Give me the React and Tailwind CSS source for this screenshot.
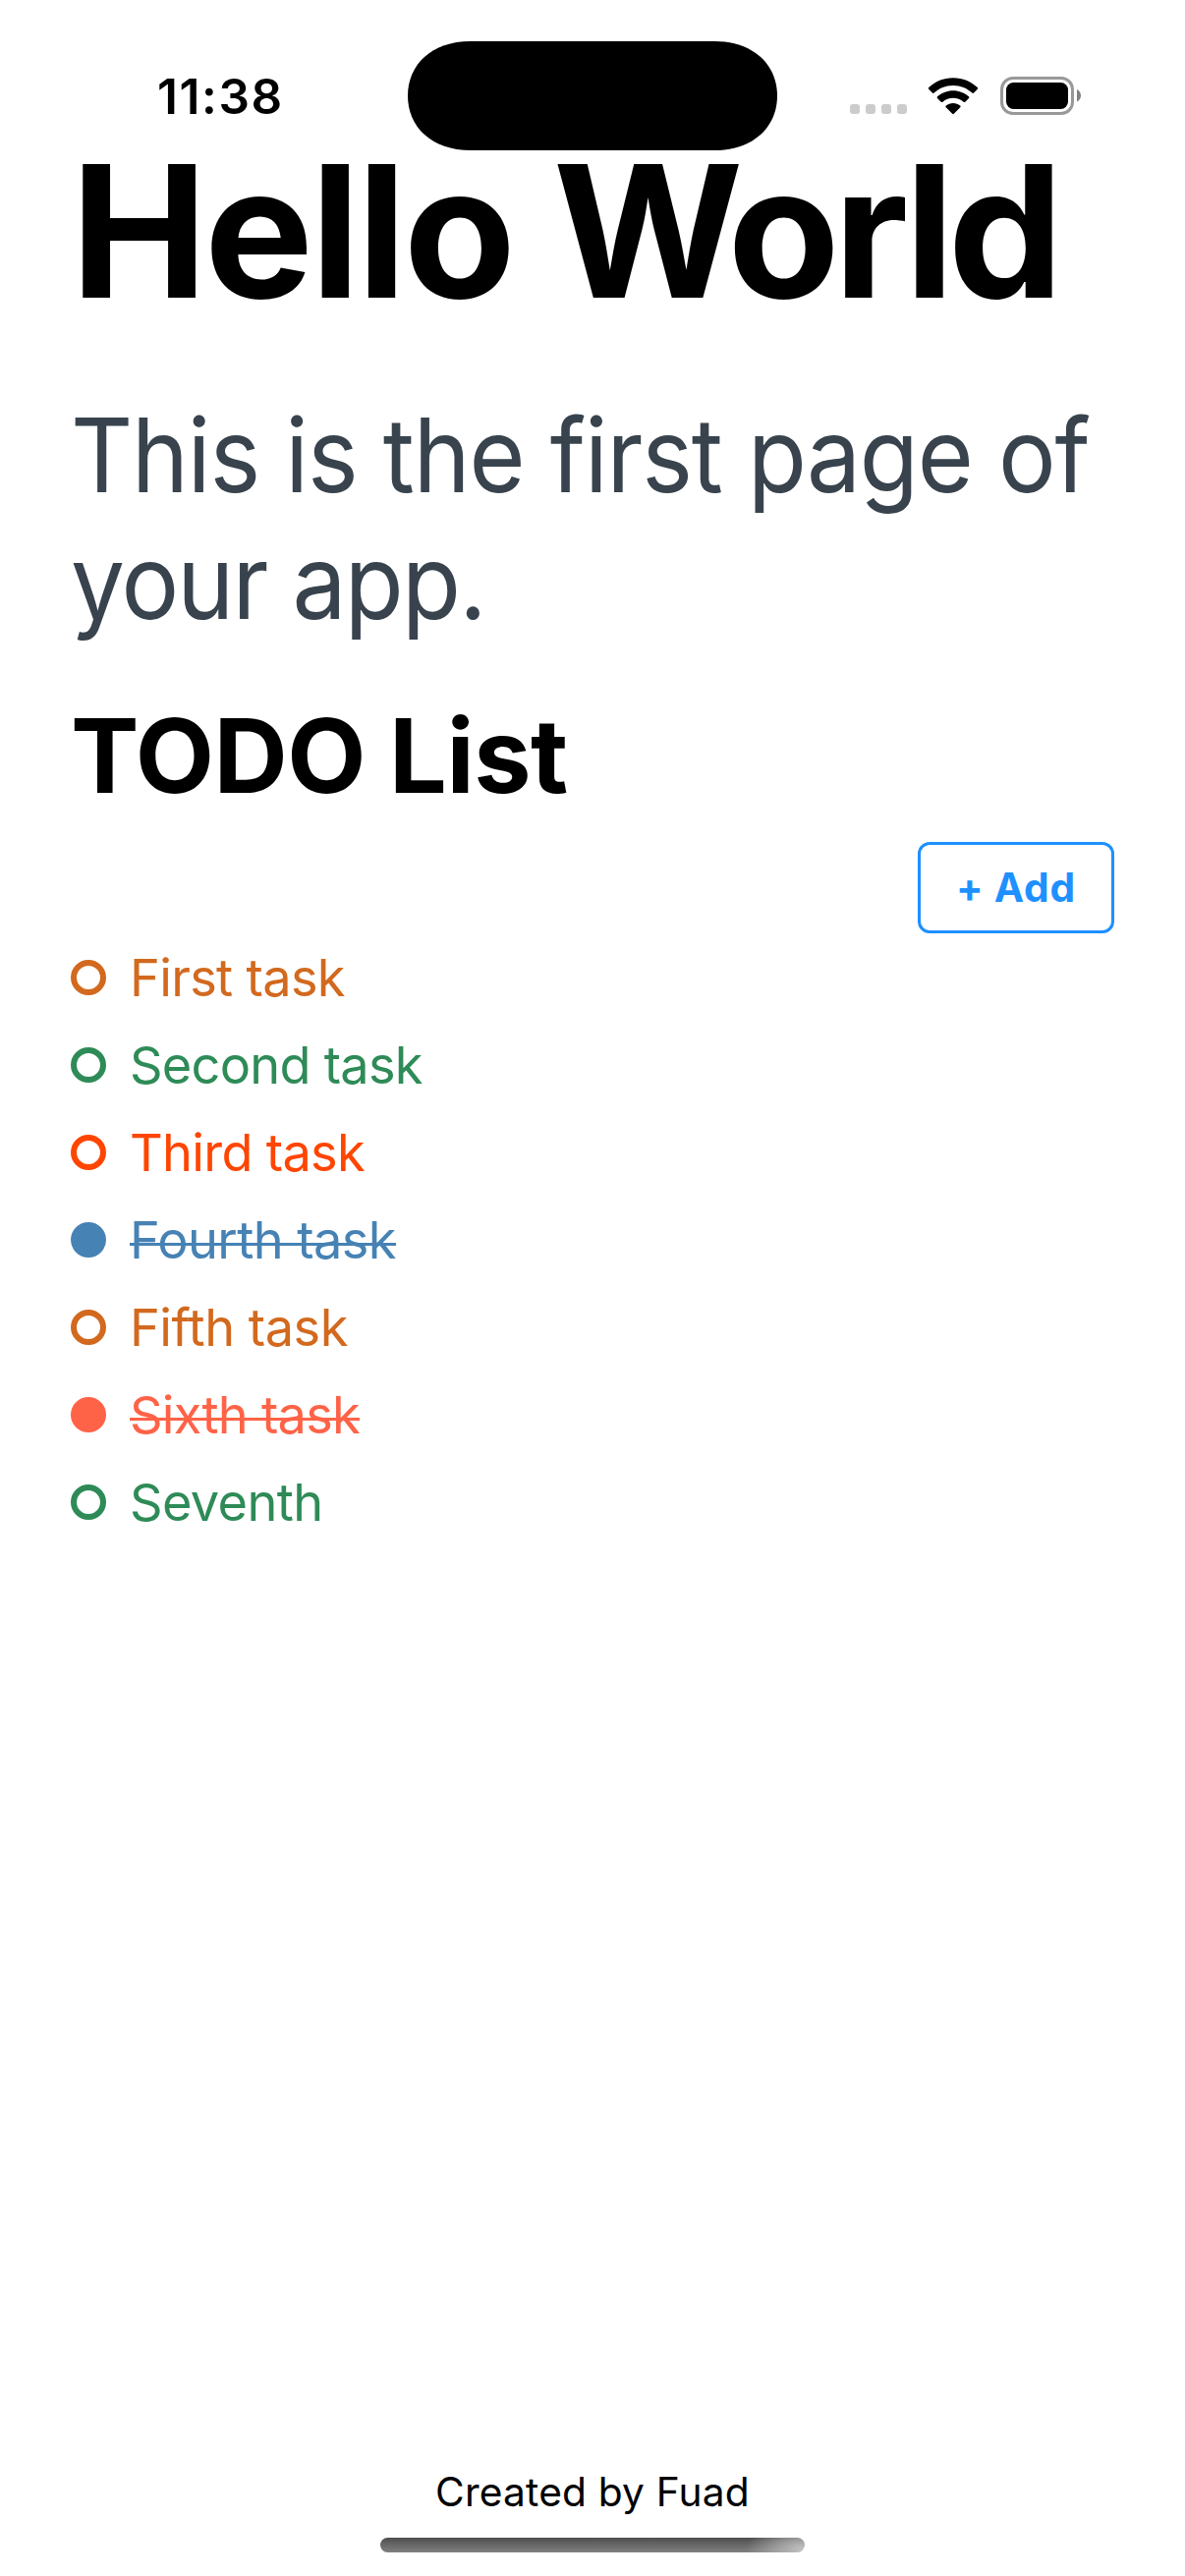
const tasks = [
  { title: "First task", text: "text-[#d2691e] tracking-[-0.68px]", ring: "border-[#d2691e]" },
  { title: "Second task", text: "text-[#2e8b57] tracking-[-0.75px]", ring: "border-[#2e8b57]" },
  { title: "Third task", text: "text-[#ff4500] tracking-[-0.69px]", ring: "border-[#ff4500]" },
  { title: "Fourth task", text: "text-[#4682b4] tracking-[-0.6px]", ring: "border-[#4682b4] bg-[#4682b4]", done: true },
  { title: "Fifth task", text: "text-[#d2691e] tracking-[-0.5px]", ring: "border-[#d2691e]" },
  { title: "Sixth task", text: "text-[#ff6347] tracking-[-0.76px]", ring: "border-[#ff6347] bg-[#ff6347]", done: true },
  { title: "Seventh", text: "text-[#2e8b57] tracking-[-0.6px]", ring: "border-[#2e8b57]" },
];

function WifiIcon() {
  return (
    <svg className="block h-[38px] w-[52px]" viewBox="0 0 52 38" fill="currentColor">
      <path d="M26 0.3C35.6 0.3 44.4 4 50.8 10.1c.5.5.5 1.2 0 1.7l-3.7 3.7c-.5.5-1.2.5-1.7 0C40.3 10.7 33.5 7.9 26 7.9S11.700 10.7 6.6 15.5c-.5.5-1.2.5-1.700 0L1.2 11.8c-.5-.5-.5-1.2 0-1.7C7.6 4 16.4.3 26 .3z" />
      <path d="M26 13.2c6.1 0 11.7 2.3 16 6.1.5.5.5 1.2 0 1.7l-3.7 3.7c-.5.5-1.2.5-1.7 0C33.8 22.2 30.1 20.7 26 20.7s-7.8 1.500-10.6 4c-.5.5-1.2.5-1.7 0L10 21c-.5-.5-.5-1.2 0-1.7 4.3-3.8 9.9-6.1 16-6.1z" />
      <path d="M26 26c2.7 0 5.2.9 7.2 2.5.6.5.6 1.2.1 1.7l-6.5 6.6c-.5.5-1.1.5-1.6 0l-6.500-6.6c-.5-.5-.5-1.2.1-1.7C20.8 26.900 23.3 26 26 26z" />
    </svg>
  );
}

function BatteryIcon() {
  return (
    <svg className="block h-[39px] w-[83px]" viewBox="0 0 83 39">
      <rect x="1.5" y="1.5" width="72" height="36" rx="11.5" fill="none" stroke="#999999" strokeWidth="3" />
      <rect x="6" y="6" width="63" height="27" rx="7.5" fill="#000000" />
      <path d="M78 13c2.400 1 4 3.500 4 6.300s-1.600 5.300-4 6.300z" fill="#808080" />
    </svg>
  );
}

function DynamicIsland() {
  return (
    <svg className="block h-[111px] w-[376px]" viewBox="0 0 376 111">
      <path d="M64 0H312C352 0 376 24 376 55.5S352 111 312 111H64C24 111 0 87 0 55.5S24 0 64 0Z" fill="#000000" />
    </svg>
  );
}

function StatusBar() {
  return (
    <header className="flex h-[136px] shrink-0 items-start">
      <div className="w-[415px] shrink-0 pl-[160px] pt-[68px] text-[49.5px] font-semibold leading-[60px] tracking-[1.6px]">
        11:38
      </div>
      <div className="mt-[41.5px] shrink-0">
        <DynamicIsland />
      </div>
      <div className="ml-[74px] flex pt-[78px]">
        <div className="mt-[28px] flex gap-[6px]">
          {[0, 1, 2, 3].map((dot) => (
            <span key={dot} className="size-[10px] rounded-[3px] bg-[#cccccc]" />
          ))}
        </div>
        <div className="ml-[21px] mt-px">
          <WifiIcon />
        </div>
        <div className="ml-[22px]">
          <BatteryIcon />
        </div>
      </div>
    </header>
  );
}

export default function App() {
  return (
    <div className="flex h-[2622px] w-[1206px] flex-col overflow-hidden bg-white font-['Inter',sans-serif] text-black">
      <StatusBar />
      <main className="flex flex-1 flex-col px-[72px]">
        <h1 className="whitespace-nowrap text-[186.3px] font-bold leading-[200px] tracking-[-6.4px]">
          <span className="tracking-[-3.1px]">Hello </span>World
        </h1>
        <p className="mt-[63px] whitespace-nowrap text-[104.2px] leading-[129px] text-[#38434d]">
          <span className="block origin-left scale-x-[0.94] tracking-[-1.22px]">This is the first page of</span>
          <span className="block origin-left scale-x-[0.94] tracking-[-1.85px]">your app.</span>
        </p>
        <h2 className="mt-12 text-[104.2px] font-bold leading-[129px] tracking-[-0.53px]">TODO List</h2>
        <button className="mt-[23px] h-[93px] w-[200px] self-end rounded-xl border-[3px] border-[#1e90ff] text-[40.7px] font-bold leading-[87px] tracking-[0.79px] text-[#1e90ff]">
          + Add
        </button>
        <ul className="mt-[18px] flex flex-col gap-[35px]">
          {tasks.map((task) => (
            <li key={task.title} className="flex h-[54px] items-center gap-6">
              <span className={`size-9 shrink-0 rounded-full border-[6px] ${task.ring}`} />
              <span
                className={`relative text-[52.3px] leading-[54px] ${task.text} ${
                  task.done ? "after:absolute after:inset-x-0 after:top-[30px] after:h-[3px] after:bg-current" : ""
                }`}
              >
                {task.title}
              </span>
            </li>
          ))}
        </ul>
      </main>
      <footer className="flex flex-col items-center pb-6">
        <p className="text-[40.7px] leading-[50px] tracking-[0.17px]">Created by Fuad</p>
        <div className="mt-[21px] h-[15px] w-[432px] rounded-full bg-[radial-gradient(ellipse_60px_28px_at_100%_80%,#c4c4c4,transparent),linear-gradient(180deg,#4f4f4f,#808080)]" />
      </footer>
    </div>
  );
}
